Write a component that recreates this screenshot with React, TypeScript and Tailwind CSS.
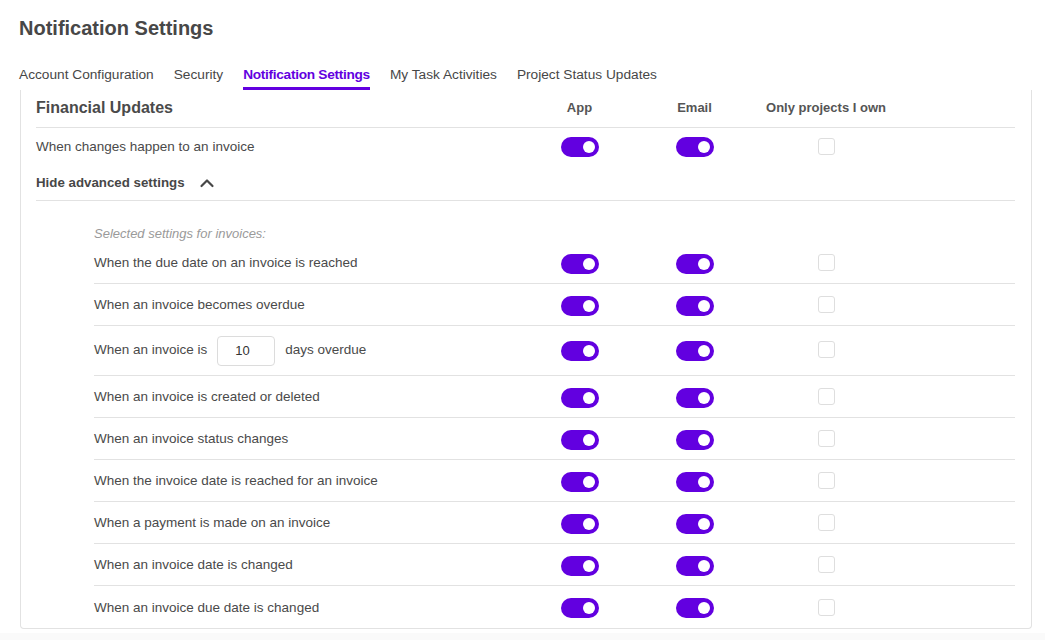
import { useState } from "react";

const tabs = [
  "Account Configuration",
  "Security",
  "Notification Settings",
  "My Task Activities",
  "Project Status Updates",
];

const invoiceRows = [
  "When the due date on an invoice is reached",
  "When an invoice becomes overdue",
  "__overdue__",
  "When an invoice is created or deleted",
  "When an invoice status changes",
  "When the invoice date is reached for an invoice",
  "When a payment is made on an invoice",
  "When an invoice date is changed",
  "When an invoice due date is changed",
];

const cols = "grid grid-cols-[1fr_115px_115px_148px_115px] items-center";

const Toggle = ({ on = true }: { on?: boolean }) => (
  <div className="flex justify-center">
    <div
      className={`w-[38px] h-[20px] rounded-full flex items-center px-[4px] ${
        on ? "bg-[#6200e0] justify-end" : "bg-[#ccc] justify-start"
      }`}
    >
      <div className="w-[12px] h-[12px] rounded-full bg-white" />
    </div>
  </div>
);

const Checkbox = () => (
  <div className="flex justify-center -mt-[2px]">
    <div className="w-[17px] h-[17px] rounded-[3px] border-[1.5px] border-[#dedede] bg-white" />
  </div>
);

const RowControls = () => (
  <>
    <Toggle />
    <Toggle />
    <Checkbox />
    <div />
  </>
);

export default function App() {
  const [activeTab, setActiveTab] = useState("Notification Settings");
  const [showAdvanced, setShowAdvanced] = useState(true);
  const [days, setDays] = useState("10");

  return (
    <div className="min-h-[640px] bg-[#fafafa] font-['Liberation_Sans',Arial,sans-serif] text-[#4a4a4a]">
      <div className="bg-white pl-[19px] pr-[13px] pb-[4px]">
        {/* Header */}
        <h1 className="pt-[14px] text-[20px] leading-[28px] font-bold text-[#474747]">
          Notification Settings
        </h1>

        {/* Tabs */}
        <div className="flex gap-[20px] mt-[22px]">
          {tabs.map((tab) => (
            <button
              key={tab}
              onClick={() => setActiveTab(tab)}
              className={`text-[13.7px] leading-[20px] pt-[1px] pb-[2px] border-b-[3px] ${
                activeTab === tab
                  ? "border-[#6200e0] text-[#6200e0] font-bold tracking-[-0.3px]"
                  : "border-transparent text-[#474747]"
              }`}
            >
              {tab}
            </button>
          ))}
        </div>

        {/* Card */}
        <div className="ml-px border-x border-b border-[#e2e2e2] rounded-b-[4px] pl-[15px] pr-[16px]">
          <div className={`${cols} h-[38px] border-b border-[#e2e2e2]`}>
            <h2 className="text-[16px] font-bold text-[#4a4a4a] -mt-[2px]">Financial Updates</h2>
            <span className="text-center text-[13px] font-bold text-[#555] -mt-[2px]">App</span>
            <span className="text-center text-[13px] font-bold text-[#555] -mt-[2px]">Email</span>
            <span className="text-center text-[13px] font-bold text-[#555] -mt-[2px]">Only projects I own</span>
            <div />
          </div>

          <div className={`${cols} h-[38px]`}>
            <span className="text-[13.5px]">When changes happen to an invoice</span>
            <RowControls />
          </div>

          <button
            onClick={() => setShowAdvanced(!showAdvanced)}
            className="w-full h-[35px] flex items-center gap-[14px] border-b border-[#e2e2e2] text-[13.3px] font-bold text-[#474747]"
          >
            Hide advanced settings
            <svg className="w-[16px] h-[16px]" viewBox="0 0 16 16" fill="none" stroke="#474747" strokeWidth={2.2} strokeLinecap="round" strokeLinejoin="round">
              <path d="M2.5 11 L8 5.5 L13.5 11" />
            </svg>
          </button>

          {showAdvanced && (
            <div className="ml-[58px]">
              <p className="pt-[25px] text-[13px] leading-[16px] italic text-[#9a9a9a]">
                Selected settings for invoices:
              </p>
              {invoiceRows.map((row, i) => {
                const last = i === invoiceRows.length - 1;
                if (row === "__overdue__") {
                  return (
                    <div key={row} className={`${cols} h-[50px] border-b border-[#e2e2e2]`}>
                      <div className="flex items-center gap-[10px] text-[13.5px]">
                        <span>When an invoice is</span>
                        <input
                          value={days}
                          onChange={(e) => setDays(e.target.value)}
                          className="w-[58px] h-[30px] rounded-[4px] border border-[#dcdcdc] pl-[17px] text-[13px] text-[#333] outline-none"
                        />
                        <span>days overdue</span>
                      </div>
                      <RowControls />
                    </div>
                  );
                }
                return (
                  <div key={row} className={`${cols} h-[42px] pt-[2px] ${last ? "" : "border-b border-[#e2e2e2]"}`}>
                    <span className="text-[13.5px]">{row}</span>
                    <RowControls />
                  </div>
                );
              })}
            </div>
          )}
        </div>
      </div>
    </div>
  );
}
